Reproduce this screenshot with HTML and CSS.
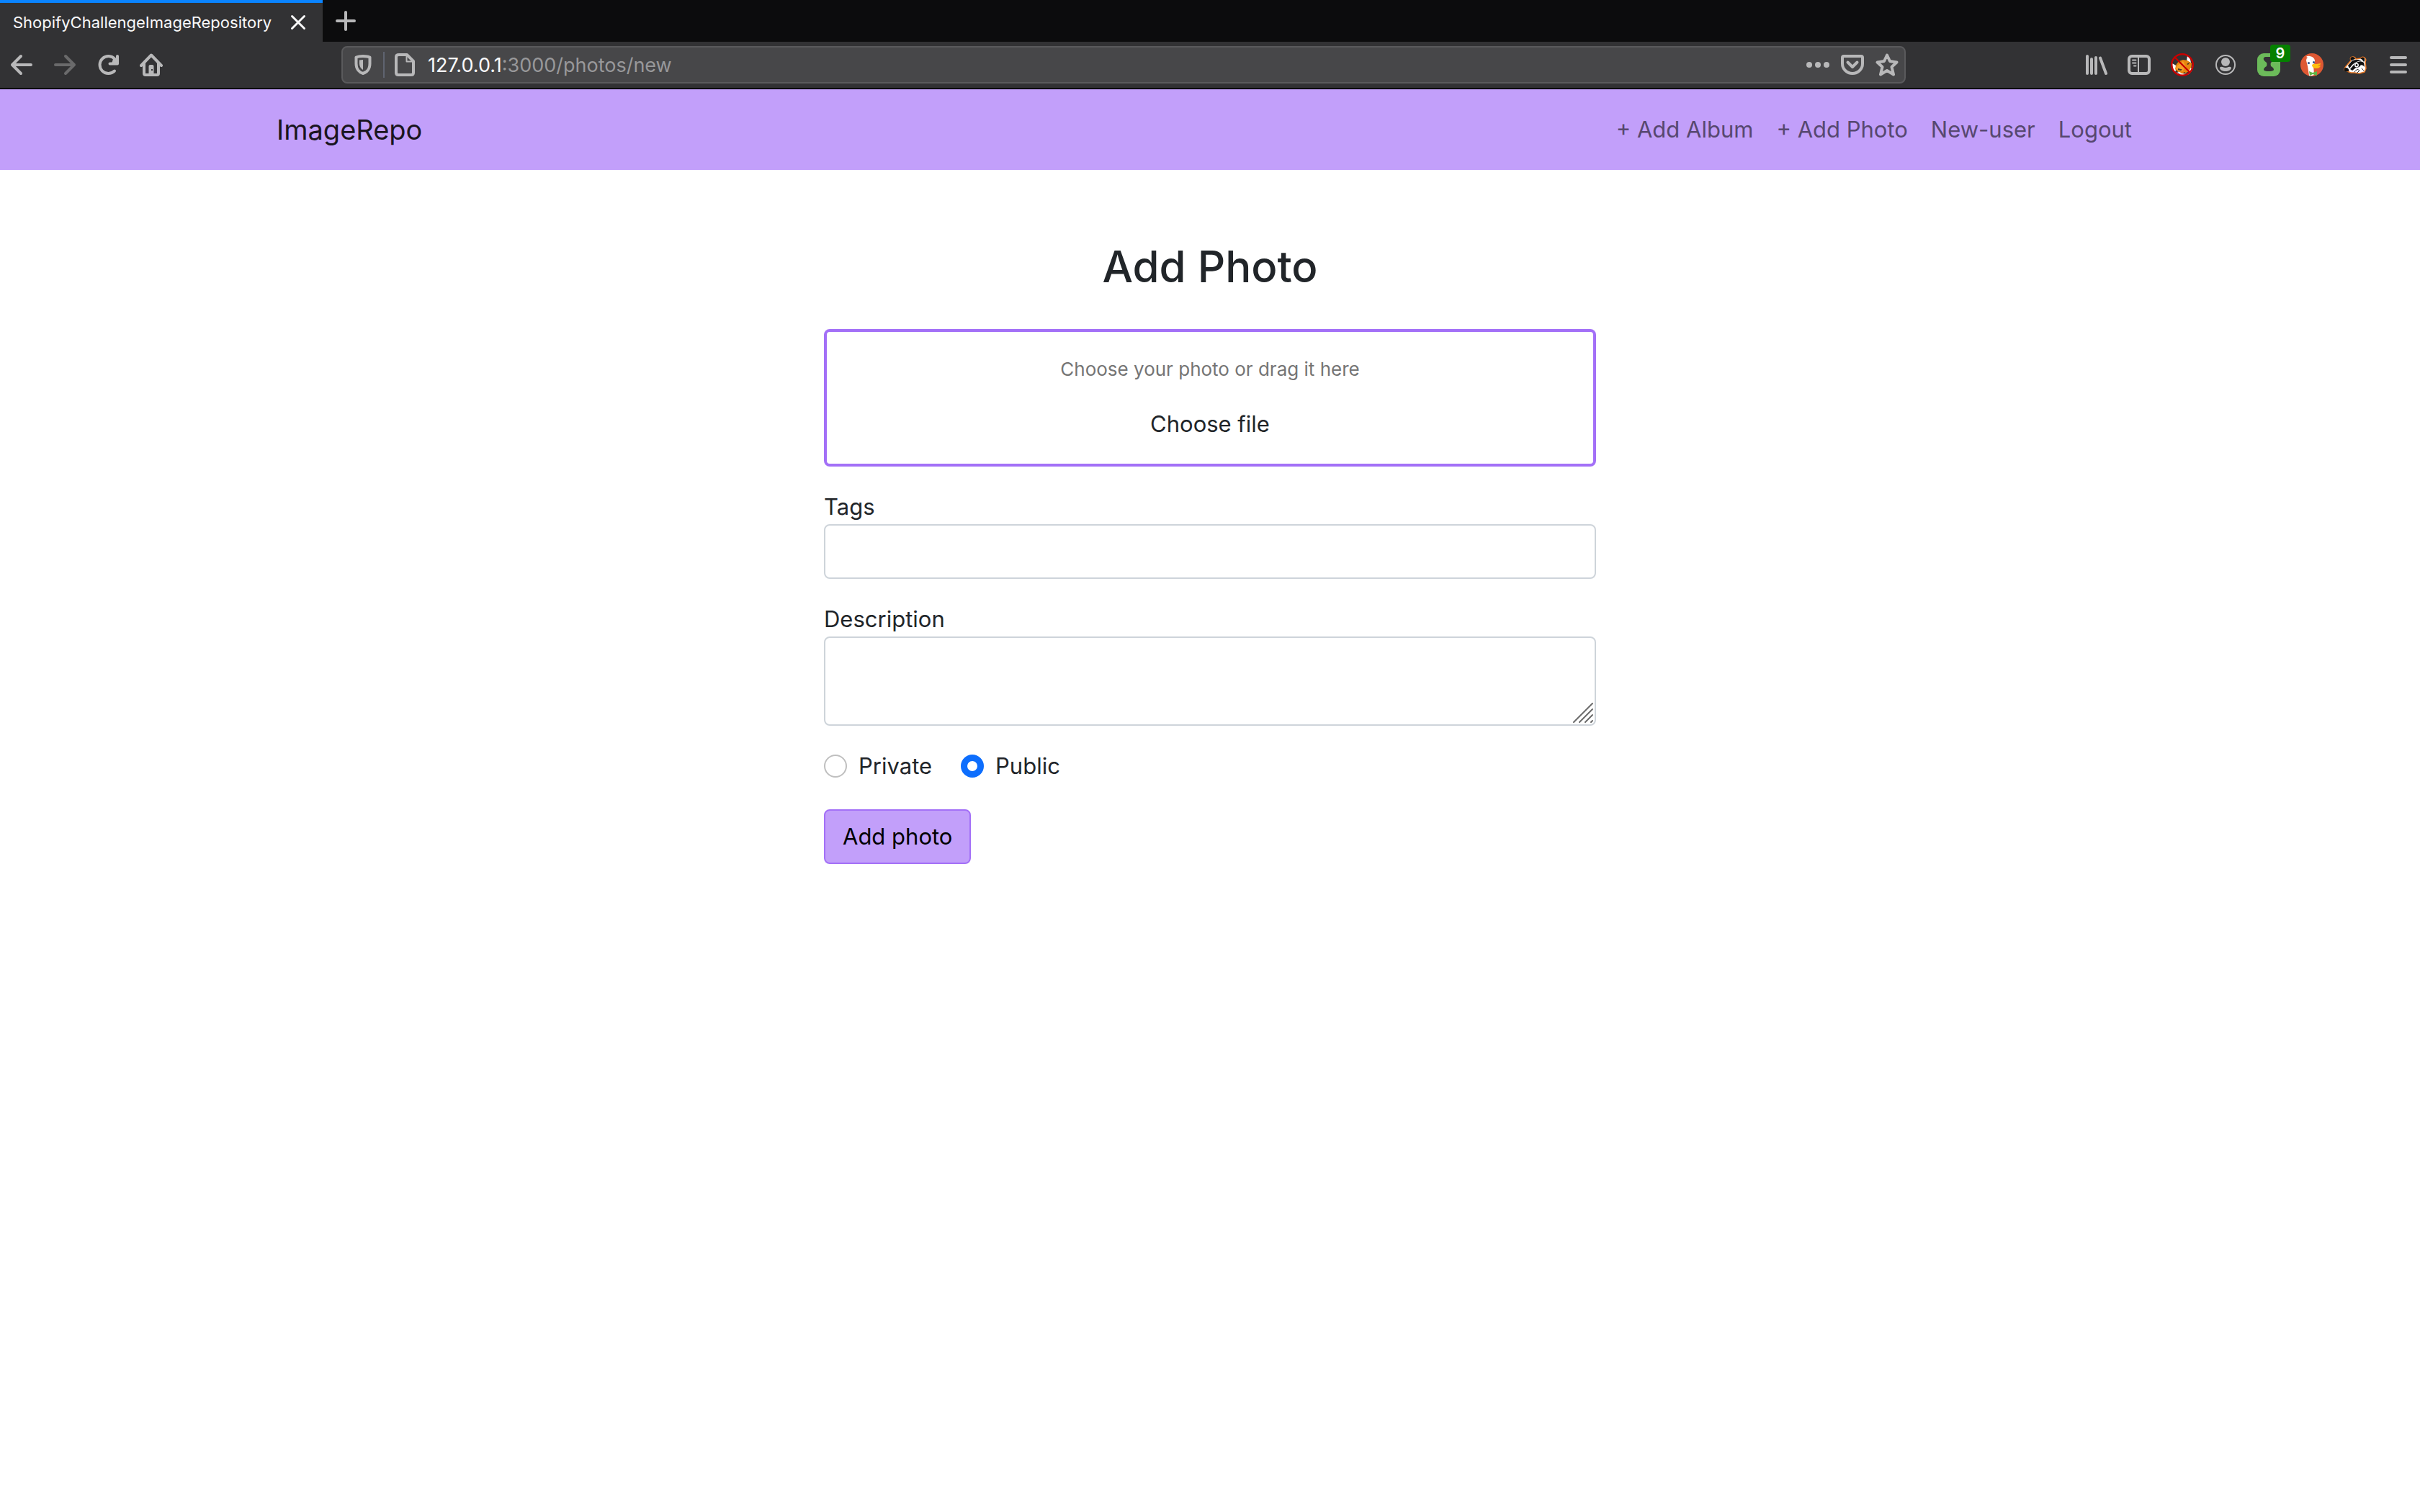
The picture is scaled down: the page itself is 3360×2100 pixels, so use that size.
FILE: index.html
```html
<!DOCTYPE html>
<html lang="en">
<head>
<meta charset="utf-8">
<title>ShopifyChallengeImageRepository</title>
<link rel="stylesheet" href="styles.css">
</head>
<body>
<header class="browser">
  <div class="tabstrip">
    <div class="tab">
      <span class="tab-title">ShopifyChallengeImageRepository</span>
      <button class="tab-close" type="button" aria-label="Close tab"><svg class="icon" viewBox="0 0 32 32"><path d="M7.500 7.500l17 17M24.500 7.500l-17 17" stroke-width="3"/></svg></button>
    </div>
    <button class="new-tab" type="button" aria-label="New tab"><svg class="icon" viewBox="0 0 32 32"><path d="M16 4v24M4 16h24" stroke-width="4"/></svg></button>
  </div>
  <div class="toolbar">
    <button class="tool" type="button" aria-label="Back"><svg class="icon" viewBox="0 0 32 32"><path d="M29 16H3M15 4L3 16l12 12" stroke-width="4"/></svg></button>
    <button class="tool tool-off" type="button" aria-label="Forward"><svg class="icon" viewBox="0 0 32 32"><path d="M3 16h26M17 4l12 12-12 12" stroke-width="4"/></svg></button>
    <button class="tool" type="button" aria-label="Reload"><svg class="icon" viewBox="0 0 32 32"><path d="M25 24.500A12 12 0 1 1 25.500 8M29 4v10.500H18.500" stroke-width="4"/><path d="M23 8l6-2v8h-8z" fill="currentColor" stroke="none"/></svg></button>
    <button class="tool" type="button" aria-label="Home"><svg class="icon" viewBox="0 0 32 32"><path d="M2 17L16 2.500 30 17M6 14v14q0 2 2 2h16q2 0 2-2V14" stroke-width="4"/><path d="M12.500 29V18q0-2 2-2h3q2 0 2 2v11z" fill="currentColor" stroke="none"/><rect x="16" y="22" width="2" height="2" fill="#323234" stroke="none"/></svg></button>
    <div class="urlbar">
      <button class="url-lead" type="button" aria-label="Tracking protection"><svg class="icon" viewBox="0 0 32 32"><path d="M16 4c4 0 7 .500 9.500 1.500v9c0 7-4 12-9.500 13.500C10.500 26.500 6.500 21.500 6.500 14.500v-9C9 4.500 12 4 16 4z" stroke-width="4"/><path d="M16 9v14c-3-1.500-5-5-5-8.500v-5z" fill="currentColor" stroke="none"/></svg></button>
      <span class="url-rule"></span>
      <button class="url-lead" type="button" aria-label="Site information"><svg class="icon" viewBox="0 0 32 32"><path d="M8 2h11l9 9v16q0 3-3 3H7q-3 0-3-3V5q0-3 4-3z" stroke-width="4"/><path d="M18.500 3v8.500H28" stroke-width="2"/></svg></button>
      <div class="url-text" role="textbox" aria-label="Address"><span class="url-host">127.0.0.1</span>:3000/photos/new</div>
      <button class="url-action" type="button" aria-label="Page actions"><svg class="icon" viewBox="0 0 32 32"><g fill="currentColor" stroke="none"><circle cx="4" cy="16" r="4"/><circle cx="16" cy="16" r="4"/><circle cx="28" cy="16" r="4"/></g></svg></button>
      <button class="url-action" type="button" aria-label="Save to Pocket"><svg class="icon" viewBox="0 0 32 32"><path d="M4 4h24q2 0 2 2v8.500a14 13.500 0 0 1-28 0V6q0-2 2-2z" stroke-width="4"/><path d="M9.500 12.500L16 19l6.500-6.500" stroke-width="4"/></svg></button>
      <button class="url-action" type="button" aria-label="Bookmark"><svg class="icon" viewBox="0 0 32 32"><path d="M16 2.500l4 8.500 9.500 1.500-7 6.500 2.500 10.500-9-5.500-9 5.500L9.500 19l-7-6.500L12 11z" stroke-width="4"/></svg></button>
    </div>
    <button class="tool" type="button" aria-label="Library"><svg class="icon" viewBox="0 0 32 32"><path d="M4 4v24M10 8v20M16 6v22M22 6.500L30 28" stroke-width="4"/></svg></button>
    <button class="tool" type="button" aria-label="Sidebars"><svg class="icon" viewBox="0 0 32 32"><rect x="2" y="4" width="28" height="24" rx="4" stroke-width="4"/><path d="M15 5v22" stroke-width="2"/><path d="M7 9.500h4.500M7 13.500h4.500M9 17.500h2.500" stroke-width="2"/></svg></button>
    <button class="tool" type="button" aria-label="Fox blocker"><svg class="icon" viewBox="0 0 32 32" stroke="none"><path d="M2 14l7 4-3 8q-4-5-4-12zM23 3q5 4 5 12l-6-4zM5 24q5 5 13 5 9 0 11-9l1-4q1 9-5 13-8 4-14 0z" fill="#fff"/><path d="M7 17q2-6 10-8l6 1 6 4-1 8q-5 6-12 6-6-1-10-6z" fill="#e8870f"/><path d="M8 18l9-7 4 8-5 6-9-3z" fill="#f6a028"/><path d="M9 26q3-1 6 2l7 1-6 1zM28 20q-2 2-3 7l4-5z" fill="#fff"/><path d="M10 21l6 1.500-2 1.500-4-1zM22 15l5-3-3 4zM17 27l3-1v2z" fill="#443527"/><circle cx="16" cy="16" r="14.800" fill="none" stroke="#c80000" stroke-width="2.400"/><path d="M5.500 5.500l21 21" stroke="#c80000" stroke-width="2.400"/></svg></button>
    <button class="tool" type="button" aria-label="Account"><svg class="icon" viewBox="0 0 32 32"><circle cx="16" cy="16" r="13" stroke-width="2"/><g fill="currentColor" stroke="none"><circle cx="16" cy="12" r="6"/><path d="M8 20q1-2 4-1 4 2 8 0 3-1 4 1c0 3-4 5-8 5s-8-2-8-5z"/></g></svg></button>
    <button class="tool" type="button" aria-label="Stylish, 9 active"><svg class="icon" viewBox="0 0 32 32" stroke="none"><rect width="32" height="32" rx="9" fill="#6cbb5a"/><path d="M11 5h10q3 1 2 4-1 2-4 4-1 2 0 5 4 2 4 5-1 2-7 2t-7-2q0-3 4-5 1-3 0-5-3-2-4-4-1-3 2-4z" fill="#323234"/></svg><span class="badge">9</span></button>
    <button class="tool" type="button" aria-label="DuckDuckGo"><svg class="icon" viewBox="0 0 32 32" stroke="none"><circle cx="16" cy="16" r="16" fill="#de5833"/><path d="M8 5q2-2 5-1 6 1 7 6 0 4-2 6l1 14q-4 2-7 1L10 18 8 10q0-3 2-4z" fill="#fff"/><path d="M16 16q2-2 6-1l6-1q0 3-4 3 2 1 4 0-1 4-6 4-6 0-6-5z" fill="#fdc010"/><circle cx="11.500" cy="13.500" r="1.600" fill="#2d4f8e"/><circle cx="18.500" cy="12.500" r="1.500" fill="#2d4f8e"/><path d="M12 25l5 2 6-2v6l-6-2-4 2z" fill="#5fb646"/></svg></button>
    <button class="tool" type="button" aria-label="Privacy Badger"><svg class="icon" viewBox="0 0 32 32"><path d="M1 23q0-3 4-7l5-6q-2-5 3-5 3 0 4 3l6-1q3-3 6-1 3 2 1 6l1 9-2 5-7 2-7-1-5 0-5-2z" fill="#fff" stroke="#e87722" stroke-width="1.500"/><g fill="#111" stroke="none"><path d="M10 10q-2-5 3-5 3 1 3 3l-3 1zM23 7q4-3 6 0 1 3-1 5-1-3-5-5zM1 21q2-2 5 0 2 2 1 4-5 1-6-1z"/><path d="M6 17l6-7q7-2 13 0-8 1-13 6l-4 5zM9 22l7-8q7-5 12-1l1 6q-3-4-6-2-1 3-6 3l-5 4z"/></g><circle cx="18" cy="16.500" r="2.200" fill="#111" stroke="#fff" stroke-width="1.500"/><path d="M15 26l4-4 3 2-3 3M25 21l3 3" stroke="#333" stroke-width="1"/></svg></button>
    <button class="tool" type="button" aria-label="Menu"><svg class="icon" viewBox="0 0 32 32"><path d="M6 6h20M6 16h20M6 26h20" stroke-width="4"/></svg></button>
  </div>
</header>

<nav class="navbar">
  <div class="container">
    <a class="brand" href="#">ImageRepo</a>
    <div class="links">
      <a class="link" href="#">+ Add Album</a>
      <a class="link" href="#">+ Add Photo</a>
      <a class="link" href="#">New-user</a>
      <a class="link" href="#">Logout</a>
    </div>
  </div>
</nav>

<main class="page">
  <h1 class="title">Add Photo</h1>
  <form class="form">
    <div class="dropzone">
      <span class="hint">Choose your photo or drag it here</span>
      <label for="photo">Choose file</label>
      <input class="file" id="photo" type="file">
    </div>
    <div class="field">
      <label for="tags">Tags</label>
      <input class="control" id="tags" type="text">
    </div>
    <div class="field">
      <label for="description">Description</label>
      <div class="area">
        <textarea class="control control-area" id="description"></textarea>
        <svg class="grip" viewBox="0 0 28 28"><path d="M1 27L27 1M9 27L27 9M17 27l10-10M25 27l2-2"/></svg>
      </div>
    </div>
    <div class="choices">
      <div class="choice"><input class="radio" type="radio" name="access" id="private"><label for="private">Private</label></div>
      <div class="choice"><input class="radio" type="radio" name="access" id="public" checked><label for="public">Public</label></div>
    </div>
    <button class="submit" type="submit">Add photo</button>
  </form>
</main>
</body>
</html>
```
FILE: styles.css
```css
*,
*::before,
*::after {
  box-sizing: border-box;
}

body {
  margin: 0;
  background: #fff;
  color: #212529;
  font-family: Inter, "Liberation Sans", sans-serif;
  font-size: 31px;
  line-height: 48px;
}

button {
  margin: 0;
  padding: 0;
  border: 0;
  background: none;
  color: inherit;
  font: inherit;
}

a {
  text-decoration: none;
}

/* Browser window */
.browser {
  background: #323234;
  border-bottom: 2px solid #0c0c0d;
  color: #b8b8b9;
}

.tabstrip {
  display: flex;
  height: 58px;
  background: #0c0c0d;
}

.tab {
  display: flex;
  align-items: center;
  width: 448px;
  padding: 0 18px;
  border-top: 4px solid #0a84ff;
  background: #323234;
  color: #f9f9fa;
}

.tab-title {
  flex: 1;
  font-size: 22px;
  line-height: 32px;
  white-space: nowrap;
}

.tab-close,
.new-tab,
.tool,
.url-lead,
.url-action {
  display: flex;
  align-items: center;
  justify-content: center;
}

.tab-close {
  width: 32px;
}

.new-tab {
  width: 64px;
}

.icon {
  display: block;
  width: 32px;
  height: 32px;
  fill: none;
  stroke: currentColor;
  stroke-linecap: round;
  stroke-linejoin: round;
}

.icon[stroke="none"] {
  stroke: none;
}

.toolbar {
  display: flex;
  align-items: center;
  height: 64px;
}

.tool {
  position: relative;
  width: 60px;
  height: 60px;
}

.tool-off {
  color: #6a6a6b;
}

.badge {
  position: absolute;
  top: 2px;
  left: 32px;
  width: 28px;
  border-radius: 4px;
  background: #058000;
  color: #fff;
  font-size: 20px;
  font-weight: 600;
  line-height: 24px;
  text-align: center;
}

.urlbar {
  display: flex;
  flex: 1;
  align-items: center;
  height: 52px;
  margin: 0 234px;
  border: 2px solid #5a5a5c;
  border-radius: 8px;
  background: #474749;
}

.url-lead {
  width: 56px;
}

.url-rule {
  width: 2px;
  height: 36px;
  background: #5f6470;
}

.url-action {
  width: 48px;
}

.url-text {
  flex: 1;
  padding: 2px 0 0 4px;
  color: #98989a;
  font-size: 27px;
  line-height: 40px;
}

.url-host {
  color: #f9f9fa;
}

/* Site navigation */
.navbar {
  padding: 16px 0;
  background: #c29ffa;
}

.container {
  display: flex;
  align-items: center;
  justify-content: space-between;
  max-width: 2640px;
  margin: 0 auto;
  padding: 0 24px;
}

.brand {
  color: #1a151f;
  font-size: 38px;
  line-height: 80px;
}

.links {
  display: flex;
}

.link {
  padding: 0 16px;
  color: #574870;
}

/* Photo form */
.page {
  max-width: 1072px;
  margin: 0 auto;
  padding-top: 96px;
}

.title {
  margin: 0 0 48px;
  font-size: 60px;
  font-weight: 500;
  line-height: 77px;
  text-align: center;
}

.form {
  display: flex;
  flex-direction: column;
  gap: 32px;
}

.dropzone {
  position: relative;
  display: flex;
  flex-direction: column;
  align-items: center;
  gap: 28px;
  padding: 28px 0 31px;
  border: 4px solid #a370f7;
  border-radius: 8px;
}

.hint {
  color: #757575;
  font-size: 26px;
}

.file {
  position: absolute;
  inset: 0;
  width: 100%;
  opacity: 0;
}

.field {
  display: flex;
  flex-direction: column;
}

.control {
  display: block;
  width: 100%;
  height: 76px;
  padding: 12px 24px;
  border: 2px solid #ced4da;
  border-radius: 8px;
  background: #fff;
  color: inherit;
  font: inherit;
}

.area {
  position: relative;
}

.control-area {
  height: 124px;
  resize: none;
}

.grip {
  position: absolute;
  right: 4px;
  bottom: 4px;
  width: 28px;
  height: 28px;
  fill: none;
  stroke: #6c6c6c;
  stroke-width: 2;
  stroke-linecap: round;
}

.choices {
  display: flex;
  gap: 40px;
}

.choice {
  display: flex;
  align-items: center;
  gap: 16px;
}

.radio {
  width: 32px;
  height: 32px;
  margin: 0;
  border: 2px solid #bfbfbf;
  border-radius: 50%;
  background: #fff;
  appearance: none;
}

.radio:checked {
  border: 9px solid #0d6efd;
}

.submit {
  align-self: flex-start;
  margin-top: 4px;
  padding: 12px 24px;
  border: 2px solid #a370f7;
  border-radius: 8px;
  background: #c29ffa;
  color: #000;
}
```
